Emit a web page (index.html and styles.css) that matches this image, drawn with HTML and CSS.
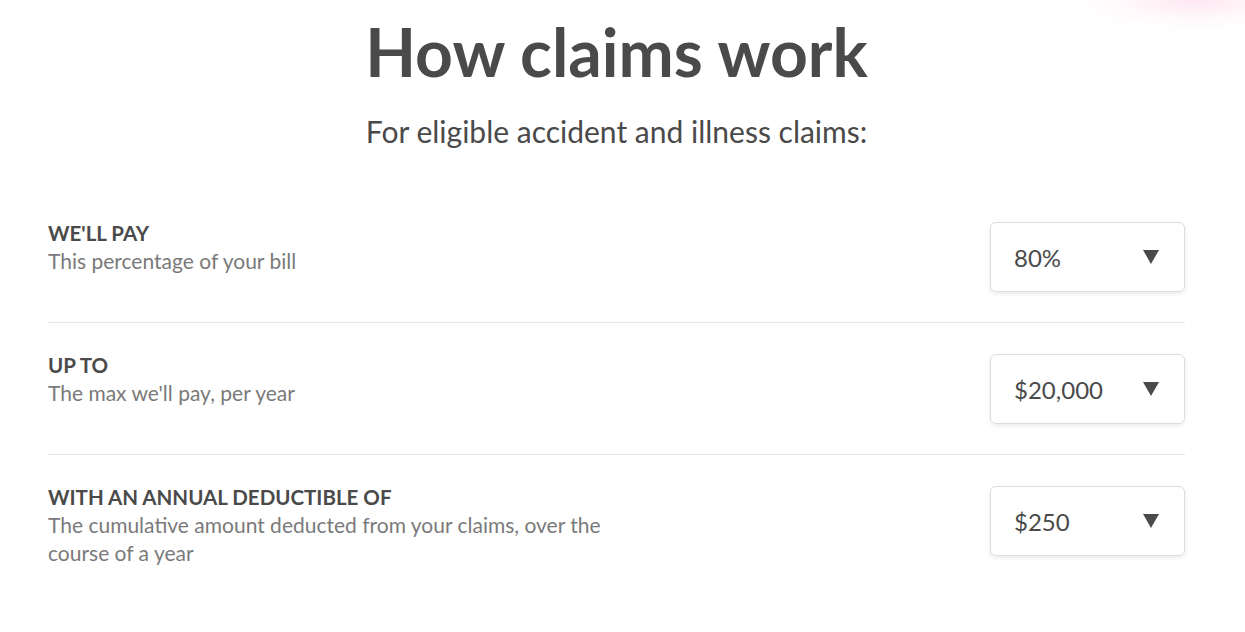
FILE: index.html
```html
<!DOCTYPE html>
<html lang="en">
<head>
<meta charset="UTF-8">
<meta name="viewport" content="width=device-width, initial-scale=1.0">
<title>How claims work</title>
<link rel="stylesheet" href="styles.css">
</head>
<body>
    <div class="glow"></div>

    <div class="container">
        <h1>How claims work</h1>
        <p class="subtitle">For eligible accident and illness claims:</p>

        <div class="options">
            <div class="row">
                <div class="info">
                    <div class="label">WE'LL PAY</div>
                    <div class="desc">This percentage of your bill</div>
                </div>
                <div class="select">
                    <span>80%</span>
                    <span class="arrow"></span>
                </div>
            </div>

            <div class="row">
                <div class="info">
                    <div class="label">UP TO</div>
                    <div class="desc">The max we'll pay, per year</div>
                </div>
                <div class="select">
                    <span>$20,000</span>
                    <span class="arrow"></span>
                </div>
            </div>

            <div class="row">
                <div class="info">
                    <div class="label">WITH AN ANNUAL DEDUCTIBLE OF</div>
                    <div class="desc">The cumulative amount deducted from your claims, over the course of a year</div>
                </div>
                <div class="select">
                    <span>$250</span>
                    <span class="arrow"></span>
                </div>
            </div>
        </div>
    </div>
</body>
</html>
```

FILE: styles.css
```css
body { margin: 0; font-family: Lato, "Open Sans", sans-serif; color: #4a4a4a; background: #fff; overflow: hidden; }
.glow { position: absolute; top: 0; right: 0; width: 220px; height: 50px; background: radial-gradient(ellipse 130px 32px at 78% 0%, rgba(255, 222, 236, 0.75) 0%, rgba(255, 236, 244, 0.35) 55%, rgba(255, 255, 255, 0) 100%); }
.container { width: 1137px; margin-left: 48px; }
h1 { text-align: center; font-size: 66px; font-weight: 700; margin: 12px 0 0; line-height: 80px; }
.subtitle { text-align: center; font-size: 30px; margin: 19px 0 0; line-height: 40px; }
.options { margin-top: 40px; }
.row { display: flex; justify-content: space-between; align-items: flex-start; padding: 31px 0 30px; border-bottom: 1px solid #e6e6e6; }
.row:last-child { border-bottom: none; }
.info { max-width: 570px; margin-top: -3px; }
.label { font-size: 20.5px; font-weight: 700; line-height: 28px; }
.desc { font-size: 21px; line-height: 28px; color: #7a7a7a; }
.select { box-sizing: border-box; width: 195px; height: 70px; display: flex; align-items: center; justify-content: space-between; padding: 0 25px 0 23px; border: 1px solid #dcdcdc; border-radius: 6px; box-shadow: 0 2px 4px rgba(0, 0, 0, 0.08); font-size: 24px; }
.arrow { width: 0; height: 0; border-left: 8px solid transparent; border-right: 8px solid transparent; border-top: 14px solid #4a4a4a; }
```
